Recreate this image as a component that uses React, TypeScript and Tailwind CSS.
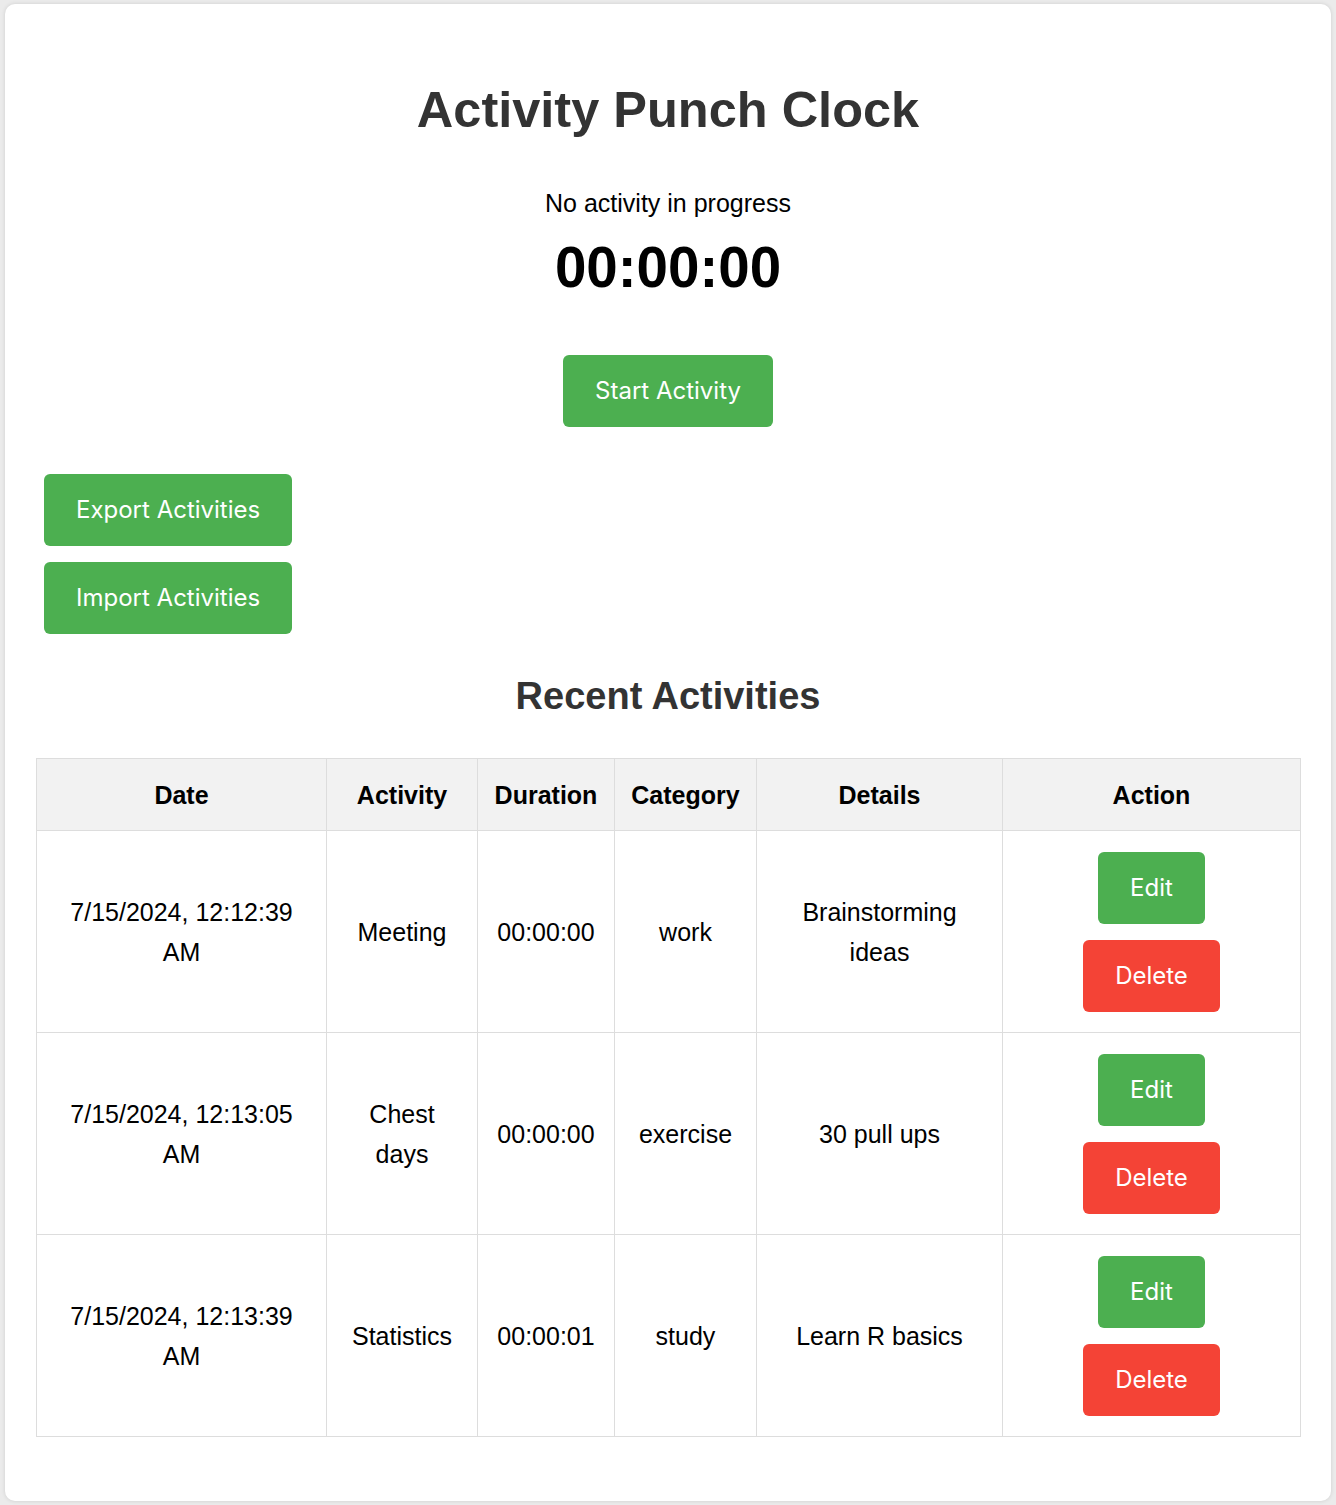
import React from "react";

type Activity = { date: string; name: string; duration: string; category: string; details: string };

const activities: Activity[] = [
    { date: "7/15/2024, 12:12:39 AM", name: "Meeting", duration: "00:00:00", category: "work", details: "Brainstorming ideas" },
    { date: "7/15/2024, 12:13:05 AM", name: "Chest days", duration: "00:00:00", category: "exercise", details: "30 pull ups" },
    { date: "7/15/2024, 12:13:39 AM", name: "Statistics", duration: "00:00:01", category: "study", details: "Learn R basics" },
];

const btn = "h-[72px] px-8 rounded-md text-white text-[24px] font-['Inter',sans-serif] leading-none";

const App: React.FC = () => {
    return (
        <div className="bg-[#ebebeb] pt-[4px] px-[5px] pb-[5px] font-['Liberation_Sans',Arial,sans-serif]">
            <div className="bg-white rounded-[10px] shadow-[0_0_4px_rgba(0,0,0,0.12)] px-[31px] pt-[76px] pb-[64px]">
                <h1 className="text-center text-[50.5px] leading-[60px] font-bold text-[#333]">Activity Punch Clock</h1>
                <p className="mt-[43px] text-center text-[25px] leading-[40px] text-black">No activity in progress</p>
                <div className="mt-[13px] text-center text-[56.5px] leading-[64px] font-bold text-black">00:00:00</div>
                <div className="mt-[55px] flex justify-center">
                    <button className={`${btn} bg-[#4caf50]`}>Start Activity</button>
                </div>
                <div className="mt-[47px] ml-2 flex flex-col items-start gap-4">
                    <button className={`${btn} bg-[#4caf50]`}>Export Activities</button>
                    <button className={`${btn} bg-[#4caf50]`}>Import Activities</button>
                </div>
                <h2 className="mt-[38px] text-center text-[38px] leading-[48px] font-bold text-[#333]">Recent Activities</h2>
                <table className="mt-[38px] w-full table-fixed border-collapse text-[25px] leading-[40px] text-black">
                    <colgroup>
                        <col className="w-[290px]" />
                        <col className="w-[151px]" />
                        <col className="w-[137px]" />
                        <col className="w-[142px]" />
                        <col className="w-[246px]" />
                        <col className="w-[298px]" />
                    </colgroup>
                    <thead>
                        <tr className="bg-[#f2f2f2]">
                            {["Date", "Activity", "Duration", "Category", "Details", "Action"].map((h) => (
                                <th key={h} className="h-[72px] border border-[#ddd] px-1 text-center font-bold">{h}</th>
                            ))}
                        </tr>
                    </thead>
                    <tbody>
                        {activities.map((a) => (
                            <tr key={a.date}>
                                <td className="border border-[#ddd] px-[18px] text-center align-middle">{a.date}</td>
                                <td className="border border-[#ddd] px-[18px] text-center align-middle">{a.name}</td>
                                <td className="border border-[#ddd] px-1 text-center align-middle">{a.duration}</td>
                                <td className="border border-[#ddd] px-1 text-center align-middle">{a.category}</td>
                                <td className="border border-[#ddd] px-[18px] text-center align-middle">{a.details}</td>
                                <td className="border border-[#ddd] pt-[21px] pb-[20px] align-middle">
                                    <div className="flex flex-col items-center gap-4">
                                        <button className={`${btn} bg-[#4caf50]`}>Edit</button>
                                        <button className={`${btn} bg-[#f44336]`}>Delete</button>
                                    </div>
                                </td>
                            </tr>
                        ))}
                    </tbody>
                </table>
            </div>
        </div>
    );
};

export default App;
